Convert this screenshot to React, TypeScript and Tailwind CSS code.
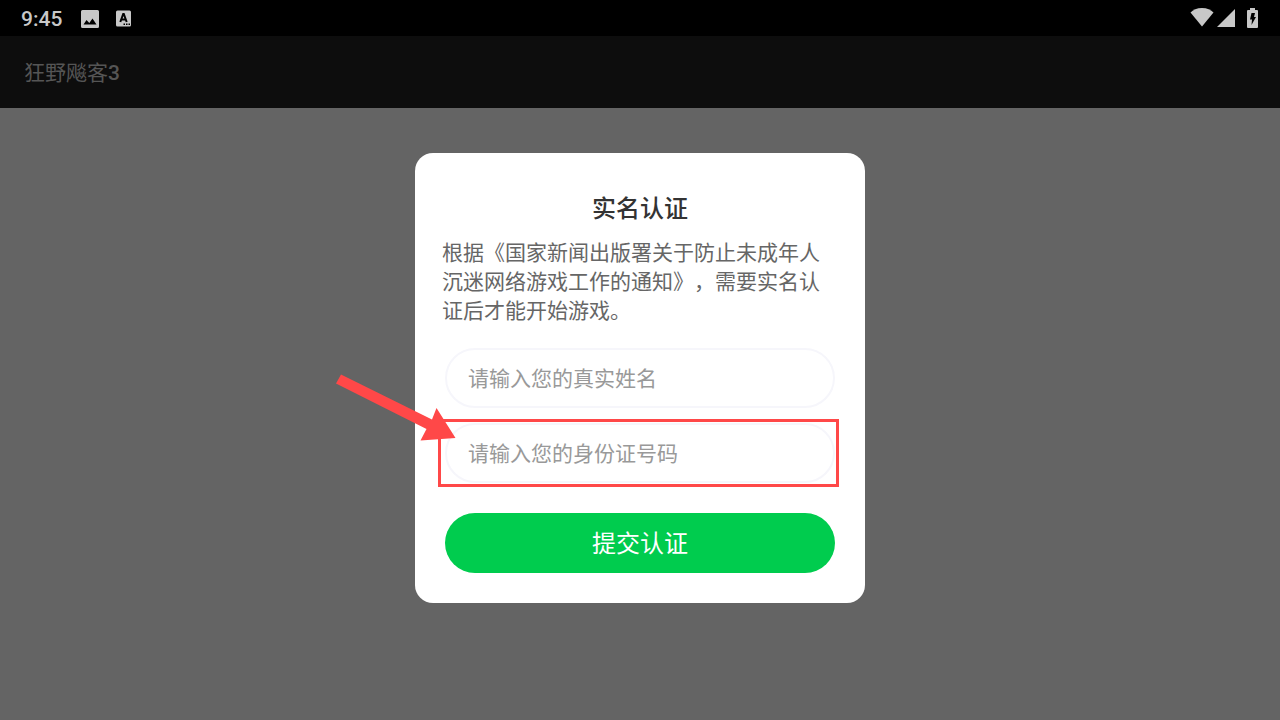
import React from 'react';

function ImageIcon() {
  return (
    <svg width="18" height="18" viewBox="0 0 18 18" fill="currentColor" aria-hidden="true">
      <path
        fillRule="evenodd"
        d="M1.500 0h15A1.500 1.500 0 0 1 18 1.500v15a1.500 1.500 0 0 1-1.500 1.500h-15A1.500 1.500 0 0 1 0 16.500v-15A1.500 1.500 0 0 1 1.500 0zM5.500 10 2.500 14.500h13L11.500 8.500 8.300 13z"
      />
    </svg>
  );
}

function LetterIcon() {
  return (
    <svg width="15" height="17" viewBox="0 0 15 17" fill="currentColor" aria-hidden="true">
      <rect y="0.500" width="15" height="16" rx="1.500" />
      <path d="M4.300 12 7.200 4h.6l2.900 8M5.500 9.500h4" fill="none" stroke="#000" strokeWidth="2" />
      <path d="M7.500 13.500H9V15H7.500zM10 13.500h1.500V15H10zM12.500 13.500H14V15h-1.500z" fill="#000" />
    </svg>
  );
}

function WifiIcon() {
  return (
    <svg width="24" height="20" viewBox="0 0 24 20" fill="currentColor" aria-hidden="true">
      <path d="M12 18.500.500 4.500C3 2 7 0 12 0s9 2 11.500 4.500z" />
    </svg>
  );
}

function SignalIcon() {
  return (
    <svg width="18" height="18" viewBox="0 0 18 18" fill="currentColor" aria-hidden="true">
      <path d="M0 18 18 0v18z" />
    </svg>
  );
}

function BatteryIcon() {
  return (
    <svg width="11" height="20" viewBox="0 0 11 20" fill="currentColor" aria-hidden="true">
      <path d="M3 0h5v2h2q1 0 1 1v16q0 1-1 1H1q-1 0-1-1V3q0-1 1-1h2z" />
      <path d="M4.500 5H8L7 9h2l-4.500 8 .5-5.500H3z" fill="#000" />
    </svg>
  );
}

function StatusBar() {
  return (
    <div className="flex h-9 items-center justify-between bg-black pl-[21px] pr-[22px] text-[#c8c8c8]">
      <div className="flex items-center pt-px">
        <span className="font-['Roboto',sans-serif] text-[21px] font-medium leading-6">9:45</span>
        <span className="ml-[19px]">
          <ImageIcon />
        </span>
        <span className="ml-[17px]">
          <LetterIcon />
        </span>
      </div>
      <div className="flex items-center pb-px">
        <WifiIcon />
        <span className="ml-[3px]">
          <SignalIcon />
        </span>
        <span className="ml-3">
          <BatteryIcon />
        </span>
      </div>
    </div>
  );
}

interface FieldProps {
  id: string;
  label: string;
  highlight?: boolean;
}

function Field({ id, label, highlight = false }: FieldProps) {
  return (
    <div className="relative">
      <input
        id={id}
        type="text"
        aria-label={label}
        placeholder={label}
        className="block h-[60px] w-full rounded-full border-2 border-[#f6f6fb] bg-white px-[21px] pb-[2px] text-[21px] text-[#333333] outline-none placeholder:text-[#999999]"
      />
      {highlight && (
        <>
          <div className="pointer-events-none absolute -bottom-1 -left-[7px] -right-1 -top-1 border-[3px] border-[#ff4848]" />
          <svg
            className="pointer-events-none absolute -left-[110px] -top-[50px]"
            width="122"
            height="70"
            viewBox="0 0 122 70"
            fill="#ff4848"
            aria-hidden="true"
          >
            <path d="M6 1.500 97 46.500 101.500 35 120.500 65 85.500 67.500 91.500 56 1 10.500z" />
          </svg>
        </>
      )}
    </div>
  );
}

export default function App() {
  return (
    <div className="flex min-h-screen flex-col bg-[#646464] font-['Noto_Sans_CJK_SC',sans-serif]">
      <StatusBar />
      <header className="flex h-[72px] items-center bg-[#0d0d0d] px-6 pt-1 text-[#555555]">
        <h1 className="font-['Roboto','Noto_Sans_CJK_SC',sans-serif] text-[21px]">
          狂野飚客<span className="font-medium">3</span>
        </h1>
      </header>
      <main className="flex flex-1 justify-center py-[45px]">
        <form
          className="w-full max-w-[450px] self-start rounded-[18px] bg-white p-[30px]"
          onSubmit={(e) => e.preventDefault()}
        >
          <h2 className="mt-[6px] text-center text-2xl font-medium leading-9 text-[#333333]">实名认证</h2>
          <p className="-mx-[3px] mt-3 text-[21px] leading-[29px] text-[#666666] [text-spacing-trim:space-all]">
            根据《国家新闻出版署关于防止未成年人沉迷网络游戏工作的通知》，需要实名认证后才能开始游戏。
          </p>
          <div className="mt-6 flex flex-col gap-[15px]">
            <Field id="real-name" label="请输入您的真实姓名" />
            <Field id="id-number" label="请输入您的身份证号码" highlight />
          </div>
          <button type="submit" className="mt-[30px] h-[60px] w-full rounded-full bg-[#00cc4e] pb-[2px] text-2xl text-white">
            提交认证
          </button>
        </form>
      </main>
    </div>
  );
}
